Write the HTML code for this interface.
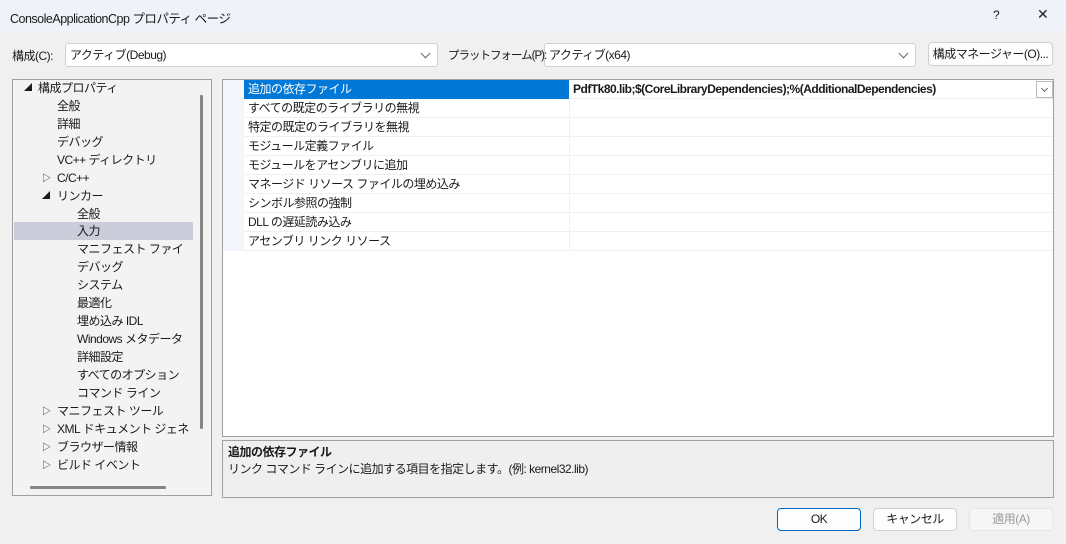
<!DOCTYPE html><html><head><meta charset="utf-8"><style>
*{box-sizing:border-box;margin:0;padding:0}
body{width:1066px;height:544px;overflow:hidden;background:#f0f0f0;font-family:"Liberation Sans","Noto Sans CJK JP",sans-serif;font-size:12px;letter-spacing:-0.5px;color:#1a1a1a;position:relative}
.a{position:absolute;white-space:nowrap}
.title{left:0;top:0;width:1066px;height:31px;background:#eff3f9}
.combo{background:#fff;border:1px solid #d0d0d0;border-radius:3px;height:24px;line-height:22px;padding-left:4px}
.chev{position:absolute;right:8px;top:6px;width:7px;height:7px;border-right:1px solid #666;border-bottom:1px solid #666;transform:rotate(45deg)}
.btn{border:1px solid #d0d0d0;background:#fdfdfd;border-radius:4px;text-align:center;line-height:21px;height:23px}
.tree div{position:absolute;height:18px;line-height:18px;overflow:hidden}
.row{position:absolute;left:244px;width:809px;height:19px;border-bottom:1px solid #eef0f4;line-height:18px}
.row span{position:absolute;left:4px}
.row i{position:absolute;left:325px;top:0;bottom:0;border-left:1px solid #eef0f4}
</style></head><body>
<div class="a title"></div>
<div class="a" style="left:10px;top:8px;font-size:12.5px">ConsoleApplicationCpp プロパティ ページ</div>
<div class="a" style="left:993px;top:8px;font-size:12px">?</div>
<div class="a" style="left:1037px;top:6px;font-size:14px;color:#222">✕</div>

<div class="a" style="left:12px;top:47px">構成(C):</div>
<div class="a combo" style="left:65px;top:43px;width:373px">アクティブ(Debug)<b class="chev"></b></div>
<div class="a combo" style="left:544px;top:43px;width:372px">アクティブ(x64)<b class="chev"></b></div>
<div class="a" style="left:448px;top:47px;font-size:11.5px;letter-spacing:-1px;z-index:2">プラットフォーム(P):</div>
<div class="a btn" style="left:928px;top:42px;width:125px;height:24px;line-height:22px">構成マネージャー(O)...</div>

<div class="a" style="left:12px;top:79px;width:200px;height:417px;border:1px solid #a0a0a0;background:#f3f3f3"></div>
<div class="a" style="left:14px;top:222px;width:179px;height:18px;background:#cbccd9"></div>
<div class="a" style="left:200px;top:95px;width:3px;height:334px;background:#858585;border-radius:1px"></div>
<div class="a" style="left:30px;top:486px;width:136px;height:3px;background:#858585;border-radius:1px"></div>
<div class="tree">
<div style="left:24px;top:79px;font-size:8px">◢</div><div style="left:38px;top:79px">構成プロパティ</div>
<div style="left:57px;top:97px">全般</div>
<div style="left:57px;top:115px">詳細</div>
<div style="left:57px;top:133px">デバッグ</div>
<div style="left:57px;top:151px">VC++ ディレクトリ</div>
<div style="left:42px;top:169px;font-size:9px">▷</div><div style="left:57px;top:169px">C/C++</div>
<div style="left:42px;top:187px;font-size:8px">◢</div><div style="left:57px;top:187px">リンカー</div>
<div style="left:77px;top:205px">全般</div>
<div style="left:77px;top:222px">入力</div>
<div style="left:77px;top:240px;width:116px">マニフェスト ファイル</div>
<div style="left:77px;top:258px">デバッグ</div>
<div style="left:77px;top:276px">システム</div>
<div style="left:77px;top:294px">最適化</div>
<div style="left:77px;top:312px">埋め込み IDL</div>
<div style="left:77px;top:330px;width:116px">Windows メタデータ</div>
<div style="left:77px;top:348px">詳細設定</div>
<div style="left:77px;top:366px;width:116px">すべてのオプション</div>
<div style="left:77px;top:384px">コマンド ライン</div>
<div style="left:42px;top:402px;font-size:9px">▷</div><div style="left:57px;top:402px">マニフェスト ツール</div>
<div style="left:42px;top:420px;font-size:9px">▷</div><div style="left:57px;top:420px;width:136px">XML ドキュメント ジェネレーター</div>
<div style="left:42px;top:438px;font-size:9px">▷</div><div style="left:57px;top:438px">ブラウザー情報</div>
<div style="left:42px;top:456px;font-size:9px">▷</div><div style="left:57px;top:456px">ビルド イベント</div>
</div>

<div class="a" style="left:222px;top:79px;width:832px;height:358px;border:1px solid #a0a0a0;background:#fff"></div>
<div class="a" style="left:223px;top:80px;width:21px;height:171px;background:#f4f6fb"></div>
<div class="row" style="top:80px"><b style="position:absolute;left:0;top:0;width:325px;height:19px;background:#0078d7"></b><span style="color:#fff">追加の依存ファイル</span><span style="left:329px;font-weight:bold">PdfTk80.lib;$(CoreLibraryDependencies);%(AdditionalDependencies)</span>
<b style="position:absolute;right:0;top:1px;width:17px;height:17px;border:1px solid #bbb;background:#fff"><b class="chev" style="right:5px;top:4px;width:5px;height:5px"></b></b></div>
<div class="row" style="top:99px"><i></i><span>すべての既定のライブラリの無視</span></div>
<div class="row" style="top:118px"><i></i><span>特定の既定のライブラリを無視</span></div>
<div class="row" style="top:137px"><i></i><span>モジュール定義ファイル</span></div>
<div class="row" style="top:156px"><i></i><span>モジュールをアセンブリに追加</span></div>
<div class="row" style="top:175px"><i></i><span>マネージド リソース ファイルの埋め込み</span></div>
<div class="row" style="top:194px"><i></i><span>シンボル参照の強制</span></div>
<div class="row" style="top:213px"><i></i><span>DLL の遅延読み込み</span></div>
<div class="row" style="top:232px"><i></i><span>アセンブリ リンク リソース</span></div>

<div class="a" style="left:222px;top:440px;width:832px;height:58px;border:1px solid #a0a0a0;background:#efefef"></div>
<div class="a" style="left:228px;top:443px;font-weight:bold">追加の依存ファイル</div>
<div class="a" style="left:228px;top:460px">リンク コマンド ラインに追加する項目を指定します。(例: kernel32.lib)</div>

<div class="a btn" style="left:777px;top:508px;width:84px;border:1px solid #0067c0">OK</div>
<div class="a btn" style="left:873px;top:508px;width:84px">キャンセル</div>
<div class="a btn" style="left:969px;top:508px;width:84px;color:#999;background:#f6f6f6;border-color:#e5e5e5">適用(A)</div>
</body></html>
